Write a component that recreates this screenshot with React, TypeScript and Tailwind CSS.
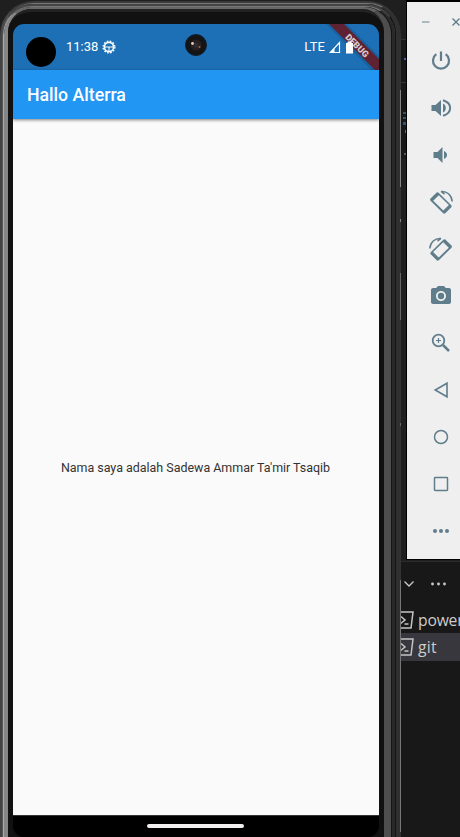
import React from "react";
import { MdPhotoCamera } from "react-icons/md";

function Icon({ children, className = "" }: { children: React.ReactNode; className?: string }) {
  return (
    <svg viewBox="0 0 24 24" className={"h-6 w-6 shrink-0 overflow-visible " + className} fill="none" stroke="currentColor" strokeWidth="1.8">
      {children}
    </svg>
  );
}

function RotateIcon({ className = "" }: { className?: string }) {
  return (
    <Icon className={className}>
      <path fill="currentColor" fillRule="evenodd" stroke="none" d="M7.700 2.600Q8.700 1.800 9.700 2.800L22.300 15.200Q23.200 16.300 22.300 17.300L16.300 23.300Q15.200 24.100 14.200 23.200L1.500 10.700Q.6 9.700 1.500 8.600zM9.800 5.200 4.200 10.800 14.300 20.500 19.900 15z" />
      <path d="M12 1.500C17.600.8 22.700 5 23.200 11.500M12 1.500l3.500 2.600" strokeWidth="1.500" />
    </Icon>
  );
}

function Toolbar() {
  return (
    <aside className="absolute left-[406px] top-0 flex h-[560px] w-[70px] flex-col border-b border-l border-t-2 border-black bg-[#efefef] text-[#607d8b]">
      <div className="flex h-[35px] items-center pl-[15px]">
        <svg width="40" height="12" viewBox="0 0 40 12" fill="none" stroke="currentColor">
          <path d="M0 8H7.500" stroke="#9aabb4" strokeWidth="1.6" />
          <path d="M30.5 4.500l7 7M37.5 4.500l-7 7" strokeWidth="1.4" />
        </svg>
      </div>
      <div className="mt-[12px] flex w-[67px] flex-col items-center gap-[23px]">
        <Icon><path d="M12 2.500V12M7.300 5.200A8 8 0 1 0 16.700 5.200" strokeWidth="2.200" /></Icon>
        <Icon>
          <path d="M2.500 9v6h4l5.500 5V4L6.500 9z" fill="currentColor" stroke="none" />
          <path d="M14 7.500v9c3.800-1.600 3.800-7.400 0-9z" fill="currentColor" stroke="none" />
          <path d="M14 4.200c9.500 2.800 9.500 12.800 0 15.600" strokeWidth="2" />
        </Icon>
        <Icon>
          <path d="M4.500 9v6h4l5 5V4l-5 5z" fill="currentColor" stroke="none" />
          <path d="M15 8v8c4-1.600 4-6.400 0-8z" fill="currentColor" stroke="none" />
        </Icon>
        <RotateIcon />
        <RotateIcon className="-scale-x-100" />
        <MdPhotoCamera className="h-6 w-6" />
        <Icon>
          <circle cx="9.5" cy="9.5" r="5.8" strokeWidth="1.8" />
          <path d="M14 14l6 6" strokeWidth="2.5" />
          <path d="M9.5 7v5M7 9.5h5" strokeWidth="1.2" />
        </Icon>
        <Icon><path d="M18 5.200v13.600L6.200 12z" strokeWidth="1.6" /></Icon>
        <Icon><circle cx="12" cy="12" r="6.500" strokeWidth="1.5" /></Icon>
        <Icon><rect x="5.500" y="5.500" width="13" height="13" rx="0.7" strokeWidth="1.5" /></Icon>
        <Icon>
          <g fill="currentColor" stroke="none">
            <circle cx="6" cy="12" r="2" /><circle cx="12" cy="12" r="2" /><circle cx="18" cy="12" r="2" />
          </g>
        </Icon>
      </div>
    </aside>
  );
}

function ShellIcon() {
  return (
    <svg className="shrink-0" width="18" height="18" viewBox="0 0 18 18" fill="none" stroke="#c5c5c5" strokeWidth="1.500">
      <path d="M3 1h14l-2 16H1M5 5.500l4 3.500-5 4M8.500 13h4" />
    </svg>
  );
}

function Terminal() {
  return (
    <section className="absolute left-[390px] top-[561px] h-[276px] w-[70px] border-t border-[#2b2b2b] bg-[#181818] font-['Open_Sans',sans-serif] text-[15.7px] text-[#cccccc]">
      <div className="flex h-[44px] items-center pl-[14px]">
        <svg width="56" height="12" viewBox="0 0 56 12" fill="none" stroke="#ccc">
          <path d="M.5 3.500 5 8 9.500 3.500" strokeWidth="1.300" />
          <g fill="#ccc" stroke="none"><circle cx="28.500" cy="6" r="1.400" /><circle cx="34.500" cy="6" r="1.400" /><circle cx="40.500" cy="6" r="1.400" /></g>
        </svg>
      </div>
      <div className="flex h-[27px] items-center gap-[4px] pl-[6px]"><ShellIcon /><span className="pt-[2px] tracking-[-0.2px]">power</span></div>
      <div className="flex h-[28px] items-center gap-[4px] bg-[#37373d] pl-[6px]"><ShellIcon /><span className="pt-[2px] tracking-[0.2px]">git</span></div>
    </section>
  );
}

function StatusBar() {
  return (
    <div className="relative flex h-[46px] items-center bg-[#1d70b6] pl-[13px] text-[13px] text-white">
      <svg className="absolute right-0 top-0" width="54" height="54" viewBox="0 0 54 54">
        <path d="M1 0h21L54 32v22z" fill="#000" opacity=".12" />
        <path d="M4 0h15L54 35v15z" fill="#651d2b" opacity=".93" />
        <text x="32.500" y="24.500" transform="rotate(45 32 21)" textAnchor="middle" fill="#d8c9cd" className="font-['Roboto',sans-serif] text-[9px] font-black">DEBUG</text>
      </svg>
      <span className="mt-[9px] h-[30px] w-[30px] rounded-full bg-black" />
      <span className="ml-[10px] w-[32px] whitespace-nowrap">11:38</span>
      <svg className="ml-[4px]" width="14" height="14" viewBox="0 0 14 14" fill="none" stroke="white">
        <circle cx="7" cy="7" r="4.600" strokeWidth="1.600" />
        <circle cx="7" cy="7" r="5.900" strokeWidth="1.300" strokeDasharray="1.700 1.390" />
        <path d="M2.500 7h9M7 7v4.500" strokeWidth="1" />
      </svg>
      <span className="absolute left-[172px] top-[10px] flex h-[22px] w-[22px] items-center justify-center rounded-full border border-[#101f2d] bg-[#151415]">
        <svg width="14" height="14" viewBox="0 0 14 14">
          <circle cx="7" cy="7" r="5.500" fill="#28201f" />
          <circle cx="7" cy="7" r="2.600" fill="#302a34" />
          <circle cx="3.500" cy="5.500" r="1.400" fill="#ddd1bd" />
          <circle cx="10.500" cy="9" r="1" fill="#a36a3c" />
        </svg>
      </span>
      <span className="ml-auto mr-[4px] tracking-[0.1px]">LTE</span>
      <svg className="relative mr-[25px]" width="25" height="13" viewBox="0 0 25 13" fill="white">
        <path d="M10.500 1.500v10h-9.300z" fill="none" stroke="white" strokeWidth="1.200" />
        <path d="M5.500 7v4.500H1z" />
        <path d="M17 2h1.500V.5h4V2H24v10.500h-7z" />
      </svg>
    </div>
  );
}

function Phone() {
  return (
    <main className="absolute left-0 top-px h-[900px] w-[401px] rounded-t-[34px] border-l-2 border-r border-t-2 border-l-[#444] border-r-[#333] border-t-[#3a3a3a] bg-[#303030] font-['Roboto',sans-serif]">
      <div className="h-full rounded-t-[32px] border-r-4 border-t border-r-[#303030] border-t-[#777] bg-[#181818]">
        <div className="h-full rounded-t-[30px] border-l border-r border-t-2 border-l-[#555] border-r-[#151515] border-t-[#444] bg-[#444]">
          <div className="h-full rounded-t-[29px] border-l border-r-[3px] border-t border-l-[#aaa] border-r-[#292929] border-t-[#777] bg-[#161616]">
            <div className="h-full rounded-t-[27px] border-r border-[#151515]">
              <div className="h-full rounded-t-[27px] border-l-4 border-r-[7px] border-t-2 border-l-[#858585] border-r-[#4e4e4e] border-t-[#666] bg-[#222]">
                <div className="h-full rounded-t-[23px] border-t-[3px] border-[#222] bg-[#111] pl-[5px] pt-[12px]">
                  <div className="h-[813px] w-[366px] overflow-hidden rounded-[11px] bg-black">
                    <StatusBar />
                    <header className="relative z-10 flex h-[49px] items-center bg-[#2196f3] pl-[14px] pt-[2px] text-[17.700px] font-medium text-white shadow-[0_1px_3px_rgba(0,0,0,0.5)]"><span>Hallo Alterra</span></header>
                    <div className="flex h-[697px] items-center justify-center border-b border-[#333] bg-[#fafafa] pr-px pt-[2px] text-[12.450px] text-[#333]"><span className="whitespace-nowrap">Nama saya adalah Sadewa Ammar Ta'mir Tsaqib</span></div>
                    <div className="flex h-[21px] items-center justify-center pb-px pr-px"><span className="h-[4px] w-[97px] rounded-full bg-[#f0eeee]" /></div>
                  </div>
                </div>
              </div>
            </div>
          </div>
        </div>
      </div>
    </main>
  );
}

/* Side keys on the phone's right edge. */
function SideKeys() {
  return (
    <div className="absolute left-[400px] top-[90px] flex w-px flex-col">
      <span className="h-[97px] bg-[#858585]" />
      <span className="mt-[32px] h-[3px] bg-[#888]" />
      <span className="mt-[51px] h-[47px] bg-[#666]" />
      <span className="mt-[103px] h-[3px] bg-[#666]" />
      <span className="mt-[154px] h-[252px] bg-[#777]" />
    </div>
  );
}

/* Sliver of the editor that shows between the phone and the toolbar. */
function EditorSliver() {
  return (
    <div className="absolute left-[401px] top-[39px] flex h-[120px] w-[5px] flex-col items-end border-t border-[#333] bg-[#181818]">
      <span className="mt-[18px] h-[2px] w-[2px] bg-[#4b5fa8]" />
      <span className="mt-[22px] h-px w-full bg-[#333]" />
      <span className="mt-[29px] h-[2px] w-[3px] bg-[#31546b]" />
      <span className="mt-[3px] h-[2px] w-[3px] bg-[#31546b]" />
      <span className="mt-[3px] h-[3px] w-[3px] bg-[#31546b]" />
      <span className="mt-[5px] h-[3px] w-px bg-[#4c7388]" />
      <span className="mt-[20px] h-[2px] w-[2px] bg-[#555]" />
    </div>
  );
}

export default function App() {
  return (
    <div className="relative h-[837px] w-[460px] overflow-hidden bg-[#1f1f1f]">
      <Terminal />
      <EditorSliver />
      <Toolbar />
      <Phone />
      <SideKeys />
    </div>
  );
}
